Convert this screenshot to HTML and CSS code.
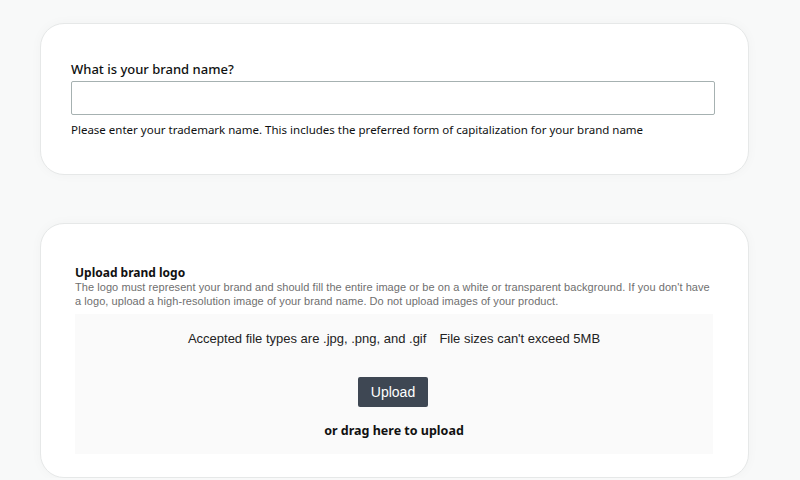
FILE: index.html
```html
<!DOCTYPE html>
<html>
<head>
<meta charset="utf-8">
<link rel="stylesheet" href="styles.css">
</head>
<body>
<main class="page">
  <section class="card card-name">
    <label class="field-label" for="brand">What is your brand name?</label>
    <input class="text-input" id="brand" type="text">
    <p class="hint">Please enter your trademark name. This includes the preferred form of capitalization for your brand name</p>
  </section>
  <section class="card card-logo">
    <h2 class="logo-title">Upload brand logo</h2>
    <p class="logo-desc">The logo must represent your brand and should fill the entire image or be on a white or transparent background. If you don't have a logo, upload a high-resolution image of your brand name. Do not upload images of your product.</p>
    <div class="dropzone">
      <p class="types"><span>Accepted file types are .jpg, .png, and .gif</span><span>File sizes can't exceed 5MB</span></p>
      <button class="upload-btn" type="button">Upload</button>
      <p class="drag">or drag here to upload</p>
    </div>
  </section>
</main>
</body>
</html>
```
FILE: styles.css
```css
html, body {
  margin: 0;
  padding: 0;
  background: #f8f9f9;
}
.page {
  display: flex;
  flex-direction: column;
  gap: 48px;
  padding: 23px 0 0 40px;
  width: 709px;
}
.card {
  background: #fff;
  border: 1px solid #e6e8e8;
  border-radius: 24px;
  box-shadow: 0 0 12px rgba(0,0,0,0.03);
  box-sizing: border-box;
}
.card-name {
  height: 152px;
  padding: 38px 33px 0 30px;
  display: flex;
  flex-direction: column;
  font-family: "Noto Sans", sans-serif;
  color: #0f1111;
}
.field-label {
  font-size: 13px;
  font-weight: 500;
  line-height: 16px;
  margin-bottom: 4px;
  margin-top: -1px;
}
.text-input {
  height: 34px;
  border: 1px solid #a6b1b1;
  border-radius: 2px;
  box-sizing: border-box;
  margin: 0;
  background: #fff;
}
.hint {
  margin: 7px 0 0;
  font-size: 11.5px;
  line-height: 16px;
}
.card-logo {
  height: 255px;
  padding: 42px 35px 0 34px;
  display: flex;
  flex-direction: column;
}
.logo-title {
  margin: 0;
  font-family: "Noto Sans", sans-serif;
  font-weight: 700;
  font-size: 12px;
  line-height: 14px;
  color: #111;
}
.logo-desc {
  margin: 0;
  font-family: "Liberation Sans", Arial, sans-serif;
  font-size: 11px;
  line-height: 14px;
  letter-spacing: 0.06px;
  color: #6f6f6f;
}
.dropzone {
  margin-top: 6px;
  height: 140px;
  background: #fafafa;
  display: flex;
  flex-direction: column;
  align-items: center;
  font-family: "Liberation Sans", Arial, sans-serif;
}
.types {
  margin: 17px 0 0;
  font-size: 13px;
  line-height: 16px;
  color: #222;
  display: flex;
  gap: 13px;
}
.upload-btn {
  margin-top: 30px;
  margin-left: -2px;
  width: 70px;
  height: 30px;
  border: 0;
  border-radius: 2px;
  background: #3e4753;
  color: #fff;
  font-family: "Liberation Sans", Arial, sans-serif;
  font-size: 14px;
  padding: 0;
}
.drag {
  margin: 16px 0 0;
  font-family: "Noto Sans", sans-serif;
  font-weight: 700;
  font-size: 12.5px;
  line-height: 16px;
  color: #111;
}
```
